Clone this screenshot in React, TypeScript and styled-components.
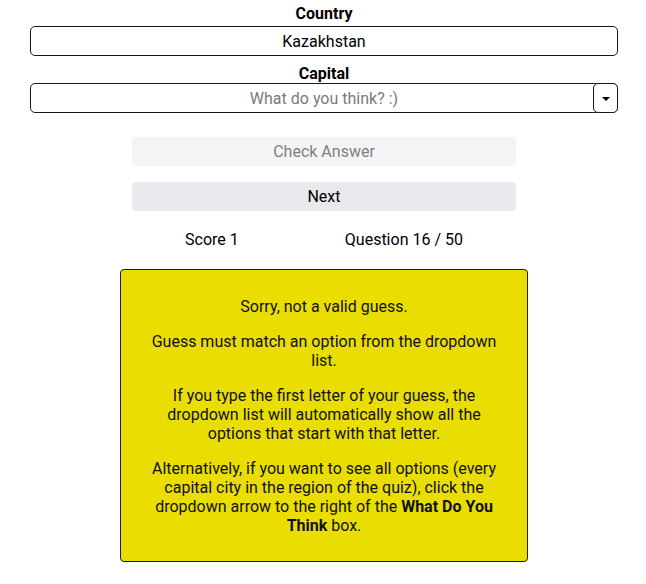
import React from "react";
import styled, { createGlobalStyle } from "styled-components";

const GlobalStyle = createGlobalStyle`
  html, body {
    margin: 0;
    padding: 0;
    background: #ffffff;
  }
  body {
    font-family: Roboto, "Liberation Sans", Arial, sans-serif;
    font-size: 16px;
    color: #000;
  }
  * { box-sizing: border-box; }
`;

const Page = styled.main`
  display: flex;
  flex-direction: column;
  align-items: center;
  width: 646px;
  padding: 4px 28px 20px 30px;
`;

const Label = styled.label<{ $gap?: number }>`
  display: block;
  width: 100%;
  margin-top: ${(p) => p.$gap ?? 0}px;
  font-weight: 700;
  font-size: 16px;
  line-height: normal;
  text-align: center;
  color: #000;
`;

const TextInput = styled.input<{ $gap?: number }>`
  display: block;
  width: 100%;
  height: 30px;
  margin: ${(p) => p.$gap ?? 0}px 0 0;
  padding: 0 4px;
  border: 1px solid #1a1a1a;
  border-radius: 5px;
  font-family: Roboto, "Liberation Sans", Arial, sans-serif;
  font-size: 16px;
  color: #000;
  text-align: center;
  background: #fff;
  outline: none;
  &::placeholder {
    color: #7a7a7a;
  }
`;

const ComboWrap = styled.div`
  position: relative;
  width: 100%;
`;

const DropButton = styled.button`
  position: absolute;
  top: 0;
  right: 0;
  width: 25px;
  height: 30px;
  padding: 0;
  border: 1px solid #1a1a1a;
  border-radius: 5px;
  background: #fff;
  display: flex;
  align-items: center;
  justify-content: center;
  cursor: pointer;
`;

const Caret = styled.span`
  display: block;
  width: 0;
  height: 0;
  margin-top: 1px;
  border-left: 4px solid transparent;
  border-right: 4px solid transparent;
  border-top: 4px solid #000;
`;

const ActionButton = styled.button<{ $gap: number; $disabledLook?: boolean }>`
  display: block;
  width: 384px;
  height: 29px;
  margin-top: ${(p) => p.$gap}px;
  border: none;
  border-radius: 4px;
  font-family: Roboto, "Liberation Sans", Arial, sans-serif;
  font-size: 16px;
  background: ${(p) => (p.$disabledLook ? "#f4f4f6" : "#e9e9ed")};
  color: ${(p) => (p.$disabledLook ? "#7f7f82" : "#000")};
`;

const ScoreRow = styled.div`
  display: flex;
  justify-content: space-around;
  width: 384px;
  margin-top: 19px;
  font-size: 16px;
  line-height: normal;
`;

const ScoreItem = styled.span`
  color: #000;
`;

const MessageBox = styled.section`
  width: 408px;
  margin-top: 20px;
  padding: 11px 20px 10px;
  background: #e9dd01;
  border: 1px solid #1c1c1c;
  border-radius: 4px;
  text-align: center;
  line-height: 19px;
  color: #111;
`;

const Para = styled.p`
  margin: 16px 0;
`;

export default function App() {
  return (
    <>
      <GlobalStyle />
      <Page>
        <Label $gap={0}>Country</Label>
        <TextInput $gap={3} value="Kazakhstan" readOnly />
        <Label $gap={8}>Capital</Label>
        <ComboWrap>
          <TextInput placeholder="What do you think? :)" />
          <DropButton aria-label="Show options">
            <Caret />
          </DropButton>
        </ComboWrap>
        <ActionButton $gap={24} $disabledLook>
          Check Answer
        </ActionButton>
        <ActionButton $gap={16}>Next</ActionButton>
        <ScoreRow>
          <ScoreItem>Score 1</ScoreItem>
          <ScoreItem>Question 16 / 50</ScoreItem>
        </ScoreRow>
        <MessageBox>
          <Para>Sorry, not a valid guess.</Para>
          <Para>Guess must match an option from the dropdown list.</Para>
          <Para>
            If you type the first letter of your guess, the dropdown list will
            automatically show all the options that start with that letter.
          </Para>
          <Para>
            Alternatively, if you want to see all options (every capital city in
            the region of the quiz), click the dropdown arrow to the right of the{" "}
            <b>What Do You Think</b> box.
          </Para>
        </MessageBox>
      </Page>
    </>
  );
}
